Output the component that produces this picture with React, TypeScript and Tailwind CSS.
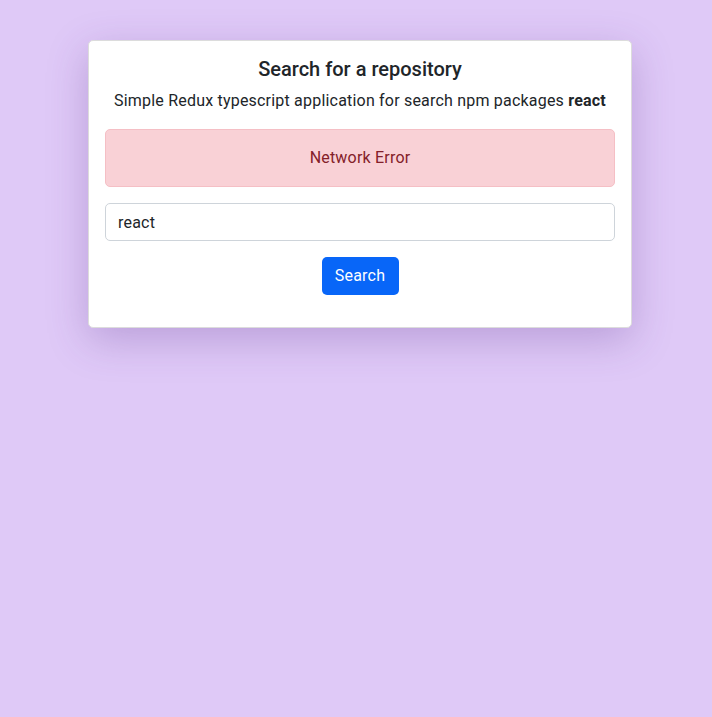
export default function App() {
  return (
    <div className="min-h-[717px] w-full bg-[#dfc9f7] pt-[40px] pl-[88px]" style={{ fontFamily: 'Roboto, "Noto Sans", sans-serif' }}>
      <div className="w-[544px] rounded-[5px] border border-[#dcdcdc] bg-white px-4 pt-4 pb-8 text-[#212529] shadow-[0_12px_40px_rgba(90,50,140,0.28)]">
        <h5 className="mb-2 text-center text-[20px] font-medium leading-[24px]">Search for a repository</h5>
        <p className="mb-4 text-center text-[16px] leading-[24px] tracking-[0.2px]">
          Simple Redux typescript application for search npm packages <b className="font-bold">react</b>
        </p>
        <div className="mb-4 rounded-[5px] border border-[#f5bfc5] bg-[#f9d1d6] p-4 text-center text-[16px] leading-[24px] tracking-[0.2px] text-[#842029]">
          Network Error
        </div>
        <input
          className="block h-[38px] w-full rounded-[5px] border border-[#ced4da] px-3 text-[16px] tracking-[0.2px] text-[#212529] outline-none"
          defaultValue="react"
        />
        <div className="mt-4 flex justify-center">
          <button className="h-[38px] w-[77px] rounded-[5px] bg-[#0866f8] text-[16px] leading-[24px] tracking-[0.2px] text-white">Search</button>
        </div>
      </div>
    </div>
  );
}
